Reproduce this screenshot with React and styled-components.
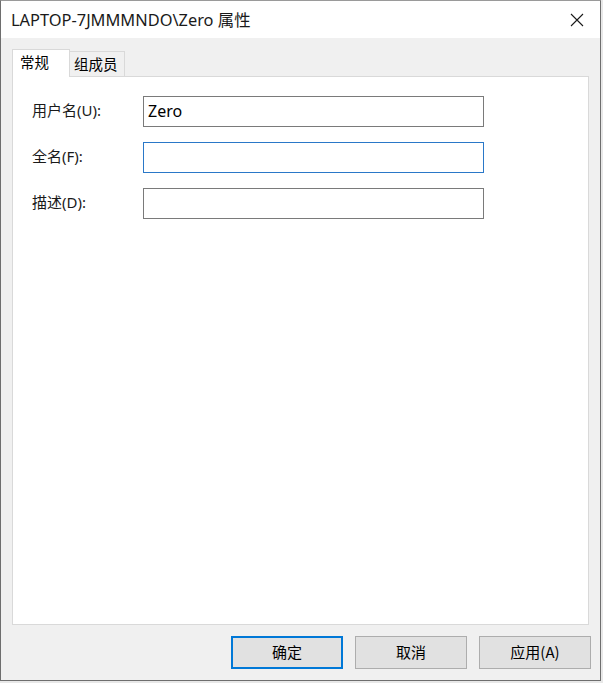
import React from "react";
import styled, { createGlobalStyle } from "styled-components";

const Global = createGlobalStyle`
  html, body { margin: 0; padding: 0; background: #e8e8e8; }
  body { font-family: "Noto Sans", "Noto Sans CJK SC", sans-serif; }
  #root { width: 603px; height: 683px; }
`;

const Window = styled.div`
  box-sizing: border-box;
  width: 601px;
  height: 681px;
  border: 1px solid #6e6e6e;
  border-top-color: #9a9a9a;
  background: #f0f0f0;
  display: flex;
  flex-direction: column;
`;

const TitleBar = styled.div`
  height: 37px;
  background: #ffffff;
  display: flex;
  align-items: center;
  justify-content: space-between;
  padding: 0 14px 0 10px;
  flex-shrink: 0;
`;

const Title = styled.div`
  font-family: "Noto Sans", "Noto Sans CJK SC", sans-serif;
  font-size: 16.4px;
  color: #1a1a1a;
  margin-top: -2px;
`;

const Close = styled.button`
  border: none;
  background: transparent;
  padding: 0;
  width: 18px;
  height: 18px;
  display: flex;
  align-items: center;
  justify-content: center;
`;

const Body = styled.div`
  flex: 1;
  display: flex;
  flex-direction: column;
  padding: 11px 11px 11px 11px;
`;

const Tabs = styled.div`
  display: flex;
  align-items: flex-end;
  height: 27px;
  position: relative;
  z-index: 1;
`;

const Tab = styled.div`
  box-sizing: border-box;
  font-family: "Noto Sans CJK SC", sans-serif;
  font-size: 14.5px;
  color: #000;
  border: 1px solid #d9d9d9;
  border-bottom: none;
  background: ${(p) => (p.$active ? "#ffffff" : "#f0f0f0")};
  height: ${(p) => (p.$active ? "28px" : "25px")};
  width: ${(p) => p.$w}px;
  padding-left: ${(p) => (p.$active ? "7px" : "4px")};
  line-height: ${(p) => (p.$active ? "24px" : "24px")};
  margin-bottom: ${(p) => (p.$active ? "-1px" : "0")};
  ${(p) => (!p.$active ? "border-left: none;" : "")}
`;

const Panel = styled.div`
  box-sizing: border-box;
  height: 549px;
  background: #ffffff;
  border: 1px solid #d9d9d9;
  padding: 19px 0 0 19px;
  display: flex;
  flex-direction: column;
  gap: 15px;
`;

const Row = styled.div`
  display: flex;
  align-items: center;
  height: 31px;
`;

const Label = styled.label`
  width: 111px;
  font-family: "Noto Sans", "Noto Sans CJK SC", sans-serif;
  font-size: 15px;
  color: #1a1a1a;
  margin-top: -4px;
`;

const Input = styled.input`
  box-sizing: border-box;
  width: 341px;
  height: 31px;
  border: 1px solid ${(p) => (p.$focus ? "#2a78c8" : "#7a7a7a")};
  outline: none;
  padding: 0 4px 2px;
  font-family: "Noto Sans", "Noto Sans CJK SC", sans-serif;
  font-size: 16px;
  color: #000;
  background: #fff;
`;

const Footer = styled.div`
  display: flex;
  justify-content: flex-end;
  gap: 12px;
  padding-top: 11px;
  margin-right: -2px;
`;

const Button = styled.button`
  box-sizing: border-box;
  width: 112px;
  height: 33px;
  background: #e1e1e1;
  border: ${(p) => (p.$default ? "2px solid #0078d7" : "1px solid #adadad")};
  font-family: "Noto Sans CJK SC", sans-serif;
  font-size: 15px;
  color: #000;
  padding: 0 0 2px;
`;

export default function App() {
  return (
    <>
      <Global />
      <Window>
        <TitleBar>
          <Title>LAPTOP-7JMMMNDO\Zero 属性</Title>
          <Close aria-label="关闭">
            <svg width="14" height="14" viewBox="0 0 14 14">
              <path d="M1 1 L13 13 M13 1 L1 13" stroke="#1a1a1a" strokeWidth="1.1" fill="none" />
            </svg>
          </Close>
        </TitleBar>
        <Body>
          <Tabs>
            <Tab $active $w={58}>常规</Tab>
            <Tab $w={55}>组成员</Tab>
          </Tabs>
          <Panel>
            <Row>
              <Label>用户名(U):</Label>
              <Input defaultValue="Zero" />
            </Row>
            <Row>
              <Label>全名(F):</Label>
              <Input $focus defaultValue="" />
            </Row>
            <Row>
              <Label>描述(D):</Label>
              <Input defaultValue="" />
            </Row>
          </Panel>
          <Footer>
            <Button $default>确定</Button>
            <Button>取消</Button>
            <Button>应用(A)</Button>
          </Footer>
        </Body>
      </Window>
    </>
  );
}
